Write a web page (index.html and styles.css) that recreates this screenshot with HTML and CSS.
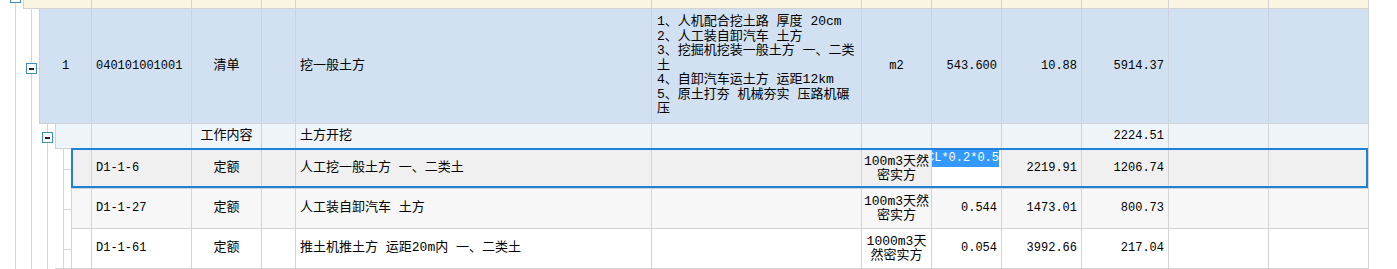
FILE: index.html
```html
<!DOCTYPE html>
<html lang="zh-CN">
<head>
    <meta charset="UTF-8">
    <title>分部分项</title>
    <link rel="stylesheet" href="styles.css">
</head>
<body>
    <div class="sheet">
        <!-- 分部 (cut off at the top) -->
        <div class="row lvl0">
            <div class="gutter"><span class="toggle"></span></div>
            <div class="cells">
                <div class="cell"></div>
                <div class="cell"></div>
                <div class="cell mid">分部</div>
                <div class="cell"></div>
                <div class="cell">土方</div>
                <div class="cell"></div>
                <div class="cell"></div>
                <div class="cell"></div>
                <div class="cell"></div>
                <div class="cell"></div>
                <div class="cell"></div>
                <div class="cell"></div>
            </div>
        </div>

        <!-- 清单 -->
        <div class="row lvl1 bill">
            <div class="gutter"><span class="toggle"></span><span class="stub"></span></div>
            <div class="cells">
                <div class="cell mid num">1</div>
                <div class="cell num">040101001001</div>
                <div class="cell mid">清单</div>
                <div class="cell"></div>
                <div class="cell">挖一般土方</div>
                <div class="cell feat">1、人机配合挖土路 厚度 20cm<br>2、人工装自卸汽车 土方<br>3、挖掘机挖装一般土方 一、二类<br>土<br>4、自卸汽车运土方 运距12km<br>5、原土打夯 机械夯实 压路机碾<br>压</div>
                <div class="cell mid num">m2</div>
                <div class="cell end num">543.600</div>
                <div class="cell end num">10.88</div>
                <div class="cell end num">5914.37</div>
                <div class="cell"></div>
                <div class="cell"></div>
            </div>
        </div>

        <!-- 工作内容 -->
        <div class="row lvl2 work">
            <div class="gutter"><span class="toggle"></span><span class="stub"></span></div>
            <div class="cells">
                <div class="cell"></div>
                <div class="cell"></div>
                <div class="cell mid">工作内容</div>
                <div class="cell"></div>
                <div class="cell">土方开挖</div>
                <div class="cell"></div>
                <div class="cell"></div>
                <div class="cell"></div>
                <div class="cell"></div>
                <div class="cell end num">2224.51</div>
                <div class="cell"></div>
                <div class="cell"></div>
            </div>
        </div>

        <!-- 定额 -->
        <div class="row lvl3 quota current">
            <div class="gutter"><span class="tick"></span></div>
            <div class="cells">
                <div class="cell"></div>
                <div class="cell num">D1-1-6</div>
                <div class="cell mid">定额</div>
                <div class="cell"></div>
                <div class="cell">人工挖一般土方 一、二类土</div>
                <div class="cell"></div>
                <div class="cell mid unit">100m3天然<br>密实方</div>
                <div class="cell edit num"><span class="sel">CL*0.2*0.5</span></div>
                <div class="cell end num">2219.91</div>
                <div class="cell end num">1206.74</div>
                <div class="cell"></div>
                <div class="cell"></div>
            </div>
        </div>

        <div class="row lvl3 quota alt">
            <div class="gutter"><span class="tick"></span></div>
            <div class="cells">
                <div class="cell"></div>
                <div class="cell num">D1-1-27</div>
                <div class="cell mid">定额</div>
                <div class="cell"></div>
                <div class="cell">人工装自卸汽车 土方</div>
                <div class="cell"></div>
                <div class="cell mid unit">100m3天然<br>密实方</div>
                <div class="cell end num">0.544</div>
                <div class="cell end num">1473.01</div>
                <div class="cell end num">800.73</div>
                <div class="cell"></div>
                <div class="cell"></div>
            </div>
        </div>

        <div class="row lvl3 quota last">
            <div class="gutter"><span class="tick"></span></div>
            <div class="cells">
                <div class="cell"></div>
                <div class="cell num">D1-1-61</div>
                <div class="cell mid">定额</div>
                <div class="cell"></div>
                <div class="cell">推土机推土方 运距20m内 一、二类土</div>
                <div class="cell"></div>
                <div class="cell mid unit">1000m3天<br>然密实方</div>
                <div class="cell end num">0.054</div>
                <div class="cell end num">3992.66</div>
                <div class="cell end num">217.04</div>
                <div class="cell"></div>
                <div class="cell"></div>
            </div>
        </div>
    </div>
</body>
</html>
```

FILE: styles.css
```css
* {
    margin: 0;
    padding: 0;
    box-sizing: border-box;
}

body {
    background: #fff;
    font-family: "Liberation Mono", "Noto Sans CJK SC", monospace;
    font-size: 13px;
    color: #000;
    overflow: hidden;
}

.sheet {
    width: 1369px;
    margin-top: -17px;
}

.row {
    display: flex;
}

/* Tree gutter: guide lines every 16px */
.gutter {
    flex: none;
    display: flex;
    align-items: center;
    background: repeating-linear-gradient(to right, transparent 0 15px, #d6d6d6 15px 16px);
}

.lvl0 .gutter { width: 23px; padding-top: 2px; }
.lvl1 .gutter { width: 39px; padding-top: 4px; }
.lvl2 .gutter { width: 55px; padding-top: 2px; }
.lvl3 .gutter { width: 71px; }

.toggle {
    flex: none;
    width: 11px;
    height: 11px;
    border: 1px solid #3e8fba;
    background: #fff;
    display: flex;
    align-items: center;
    justify-content: center;
}

.toggle::before {
    content: '';
    width: 5px;
    height: 2px;
    background: #222;
}

.lvl0 .toggle { margin-left: 10px; }
.lvl1 .toggle { margin-left: 26px; }
.lvl2 .toggle { margin-left: 42px; }

.stub {
    flex: 1;
    height: 1px;
    background: #d6d6d6;
}

.tick {
    margin-left: 64px;
    width: 7px;
    height: 1px;
    background: #d6d6d6;
}

/* last row: next sibling's top line shows under the gutter */
.last .gutter {
    background:
        linear-gradient(#d6d6d6, #d6d6d6) 55px 100% / 16px 1px no-repeat,
        repeating-linear-gradient(to right, transparent 0 15px, #d6d6d6 15px 16px);
}

.cells {
    flex: 1;
    display: grid;
    grid-template-columns: 1fr 100px 70px 34px 356px 210px 70px 70px 80px 87px 100px 100px;
    border-left: 1px solid #d3d3d3;
    border-bottom: 1px solid #d3d3d3;
    position: relative;
}

.lvl0 .cells { height: 26px; background: #faf4e2; }
.bill .cells { height: 115px; background: #d2e1f1; }
.work .cells { height: 25px; background: #eff4f9; }
.quota .cells { height: 40px; background: #fff; }
.quota.current .cells { background: #f0f0f0; }
.quota.alt .cells { background: #f7f7f7; }

.bill .cells,
.bill .cell {
    border-color: #cad3dc;
}

.cell {
    display: flex;
    align-items: center;
    padding: 0 4px;
    border-right: 1px solid #d3d3d3;
    overflow: hidden;
    white-space: nowrap;
    line-height: 14.5px;
}

.cell.mid {
    justify-content: center;
    text-align: center;
}

.cell.end {
    justify-content: flex-end;
}

.num {
    font-size: 12px;
}

.feat {
    padding-left: 5px;
}

.unit {
    line-height: 14px;
}

/* cell being edited */
.edit {
    background: #fff;
    align-items: flex-start;
    justify-content: flex-end;
    padding: 1px 2px 0 0;
}

.sel {
    flex: none;
    background: #3399ff;
    color: #fff;
    line-height: 17px;
}

/* selection frame of the current row */
.current .cells::after {
    content: '';
    position: absolute;
    top: -1px;
    left: -1px;
    right: 1px;
    bottom: 0;
    border: 2px solid #1f80d8;
    pointer-events: none;
}
```
